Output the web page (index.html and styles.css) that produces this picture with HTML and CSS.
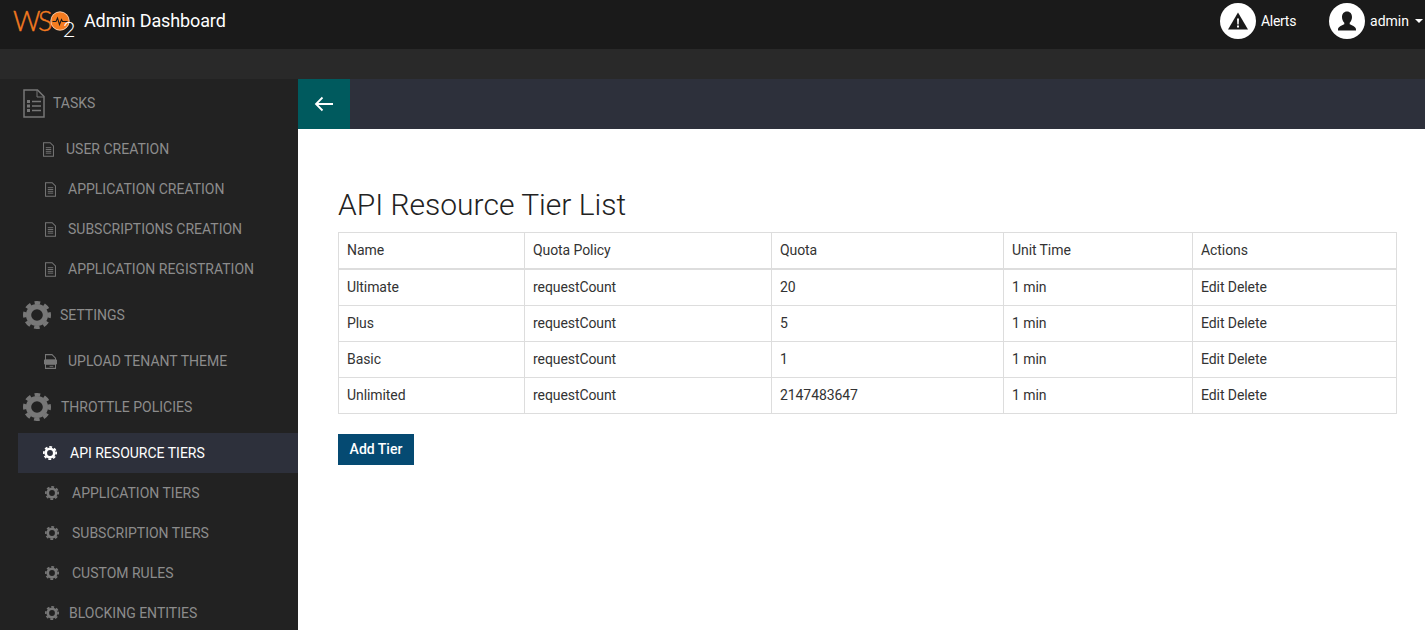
FILE: index.html
```html
<!DOCTYPE html>
<html lang="en">
<head>
    <meta charset="UTF-8">
    <title>API Resource Tier List</title>
    <link rel="stylesheet" href="styles.css">
</head>
<body>
    <svg class="icon-defs" width="0" height="0">
        <symbol id="gear" viewBox="0 0 24 24">
            <circle cx="12" cy="12" r="7.25" fill="none" stroke="currentColor" stroke-width="4.5"/>
            <circle cx="12" cy="12" r="10.5" fill="none" stroke="currentColor" stroke-width="3" stroke-dasharray="4.7 3.55" transform="rotate(-12.8 12 12)"/>
        </symbol>
        <symbol id="doc" viewBox="0 0 12 16">
            <path d="M.6.6h7.2l3.6 3.6v11.2H.6z" fill="none" stroke="currentColor" stroke-width="1.1"/>
            <path d="M3 6h6M3 8h6M3 10h6M3 12h6" stroke="currentColor" stroke-width="1"/>
        </symbol>
        <symbol id="doc-file" viewBox="0 0 14 16">
            <path d="M1.600.6h7l3.800 3.800v2H1.600zM1.600 11h10.800v4.400H1.600z" fill="none" stroke="currentColor" stroke-width="1.1"/>
            <rect x="0" y="6" width="14" height="5" fill="currentColor"/>
            <path d="M6 13.200h4" stroke="currentColor" stroke-width="1"/>
        </symbol>
    </svg>

    <header class="topbar">
        <div class="brand">
            <span class="logo">
                <span class="logo-ws">WS</span>
                <svg class="logo-o" viewBox="0 0 20 20">
                    <circle cx="10" cy="10" r="9.5" fill="#f47b20"/>
                    <circle cx="10" cy="10" r="9.2" fill="none" stroke="#fff" stroke-width=".6"/>
                    <path d="M2.500 10.500h3.500l1.500-3.500 2 6.500 2-5 1 2h5" fill="none" stroke="#1a1a1a" stroke-width="1.100"/>
                </svg>
                <span class="logo-two">2</span>
            </span>
            <span class="brand-title">Admin Dashboard</span>
        </div>
        <div class="top-actions">
            <a class="top-link top-alerts">
                <span class="round-icon">
                    <svg width="22" height="20" viewBox="0 0 22 20">
                        <path d="M11 1.500L21 18.500H1z" fill="#1a1a1a"/>
                        <path d="M10 7.500h2l-.3 6h-1.400zM10 14.600h2v2h-2z" fill="#fff"/>
                    </svg>
                </span>
                Alerts
            </a>
            <a class="top-link">
                <span class="round-icon">
                    <svg width="24" height="24" viewBox="0 0 24 24">
                        <path d="M12 2.500c3.200 0 5 2.400 5 5.600 0 2.400-1 4.500-2.300 5.700v1.500c1.500.9 6.300 2 6.300 5.200v1H3v-1c0-3.200 4.800-4.300 6.300-5.200v-1.500C8 12.600 7 10.500 7 8.100c0-3.200 1.800-5.600 5-5.600z" fill="#1a1a1a"/>
                    </svg>
                </span>
                admin
                <span class="caret"></span>
            </a>
        </div>
    </header>
    <div class="subbar"></div>

    <div class="layout">
        <nav class="sidebar">
            <div class="nav-group">
                <svg class="group-doc" width="22" height="29" viewBox="0 0 22 29">
                    <path d="M1 1h13.500L21 7.500V28H1z" fill="none" stroke="currentColor" stroke-width="1.500"/>
                    <path d="M14 1v7h7" fill="none" stroke="currentColor" stroke-width="1"/>
                    <path d="M4 11h3v3H4zM4 15.500h3v3H4zM4 20h3v3H4z" fill="currentColor"/>
                    <path d="M9 12.500h9M9 17h9M9 21.500h9" stroke="currentColor" stroke-width="1.500"/>
                </svg>
                <span class="group-label">TASKS</span>
            </div>
            <ul class="nav-list">
                <li class="nav-item item-first"><svg class="item-doc"><use href="#doc"/></svg><span>USER CREATION</span></li>
                <li class="nav-item"><svg class="item-doc"><use href="#doc"/></svg><span>APPLICATION CREATION</span></li>
                <li class="nav-item"><svg class="item-doc"><use href="#doc"/></svg><span>SUBSCRIPTIONS CREATION</span></li>
                <li class="nav-item"><svg class="item-doc"><use href="#doc"/></svg><span>APPLICATION REGISTRATION</span></li>
            </ul>

            <div class="nav-group group-tight">
                <svg class="group-gear"><use href="#gear"/></svg>
                <span class="group-label">SETTINGS</span>
            </div>
            <ul class="nav-list">
                <li class="nav-item item-upload"><svg class="item-file"><use href="#doc-file"/></svg><span>UPLOAD TENANT THEME</span></li>
            </ul>

            <div class="nav-group">
                <svg class="group-gear"><use href="#gear"/></svg>
                <span class="group-label">THROTTLE POLICIES</span>
            </div>
            <ul class="nav-list">
                <li class="nav-item item-first item-active"><svg class="item-gear"><use href="#gear"/></svg><span>API RESOURCE TIERS</span></li>
                <li class="nav-item"><svg class="item-gear"><use href="#gear"/></svg><span>APPLICATION TIERS</span></li>
                <li class="nav-item"><svg class="item-gear"><use href="#gear"/></svg><span>SUBSCRIPTION TIERS</span></li>
                <li class="nav-item"><svg class="item-gear"><use href="#gear"/></svg><span>CUSTOM RULES</span></li>
                <li class="nav-item item-tight"><svg class="item-gear"><use href="#gear"/></svg><span>BLOCKING ENTITIES</span></li>
            </ul>
        </nav>

        <div class="page">
            <div class="crumbs">
                <a class="back-btn">
                    <svg width="20" height="16" viewBox="0 0 20 16">
                        <path d="M19 8H2M8.500 1.500L2 8l6.500 6.500" fill="none" stroke="#fff" stroke-width="1.800"/>
                    </svg>
                </a>
            </div>
            <main class="content">
                <h1>API Resource Tier List</h1>
                <table class="tier-table">
                    <colgroup>
                        <col class="col-name">
                        <col class="col-policy">
                        <col class="col-quota">
                        <col class="col-unit">
                        <col>
                    </colgroup>
                    <thead>
                        <tr>
                            <th>Name</th>
                            <th>Quota Policy</th>
                            <th>Quota</th>
                            <th>Unit Time</th>
                            <th>Actions</th>
                        </tr>
                    </thead>
                    <tbody>
                        <tr>
                            <td>Ultimate</td>
                            <td>requestCount</td>
                            <td>20</td>
                            <td>1 min</td>
                            <td>Edit Delete</td>
                        </tr>
                        <tr>
                            <td>Plus</td>
                            <td>requestCount</td>
                            <td>5</td>
                            <td>1 min</td>
                            <td>Edit Delete</td>
                        </tr>
                        <tr>
                            <td>Basic</td>
                            <td>requestCount</td>
                            <td>1</td>
                            <td>1 min</td>
                            <td>Edit Delete</td>
                        </tr>
                        <tr>
                            <td>Unlimited</td>
                            <td>requestCount</td>
                            <td>2147483647</td>
                            <td>1 min</td>
                            <td>Edit Delete</td>
                        </tr>
                    </tbody>
                </table>
                <button type="button" class="add-btn">Add Tier</button>
            </main>
        </div>
    </div>
</body>
</html>
```

FILE: styles.css
```css
html, body {
    height: 100%;
}

body {
    font-family: Roboto, "Liberation Sans", sans-serif;
    font-size: 14px;
    margin: 0;
    background-color: #fff;
    color: #333;
    display: flex;
    flex-direction: column;
    overflow: hidden;
}

.icon-defs {
    display: none;
}

/* top header */
.topbar {
    flex: none;
    height: 49px;
    background-color: #1a1a1a;
    color: #fff;
    display: flex;
    justify-content: space-between;
    align-items: flex-start;
}

.brand {
    display: flex;
    align-items: center;
    height: 41px;
    padding-left: 13px;
}

.logo {
    display: flex;
    align-items: center;
    width: 71px;
    height: 41px;
}

.logo-ws {
    font-family: Lato, sans-serif;
    font-weight: 300;
    font-size: 27px;
    line-height: 41px;
    letter-spacing: -2.5px;
    color: #f47b20;
    -webkit-text-stroke: .4px #f47b20;
}

.logo-o {
    width: 20px;
    height: 20px;
    flex: none;
}

.logo-two {
    font-family: Lato, sans-serif;
    font-weight: 300;
    font-size: 22px;
    line-height: 22px;
    margin: 17px 0 0 -7px;
}

.brand-title {
    font-size: 18px;
    line-height: 41px;
    letter-spacing: -.12px;
}

.top-actions {
    display: flex;
    align-items: center;
    height: 41px;
}

.top-link {
    display: flex;
    align-items: center;
    color: #fff;
    font-size: 14px;
}

.top-alerts {
    margin-right: 33px;
    letter-spacing: -.3px;
}

.round-icon {
    width: 36px;
    height: 36px;
    margin-right: 5px;
    border-radius: 50%;
    background-color: #fff;
    display: flex;
    align-items: center;
    justify-content: center;
}

.caret {
    width: 0;
    height: 0;
    margin: 0 2px 0 6px;
    border-left: 4px solid transparent;
    border-right: 4px solid transparent;
    border-top: 4px solid #fff;
}

.subbar {
    flex: none;
    height: 30px;
    background-color: #292929;
}

.layout {
    flex: 1;
    display: flex;
    min-height: 0;
}

/* sidebar */
.sidebar {
    flex: none;
    width: 298px;
    background-color: #222;
    color: #8c8c8c;
    overflow: hidden;
}

.nav-group {
    display: flex;
    align-items: center;
    height: 48px;
    padding-left: 23px;
}

.group-doc {
    margin-right: 8px;
    color: #777;
}

.group-gear {
    width: 28px;
    height: 28px;
    margin-right: 10px;
    color: #777;
}

.group-tight .group-gear {
    margin-right: 9px;
}

.nav-list {
    list-style: none;
    margin: 0;
    padding: 2px 0;
}

.nav-item {
    display: flex;
    align-items: center;
    height: 40px;
    margin-left: 18px;
    padding-left: 27px;
}

.nav-item.item-first {
    padding-left: 25px;
}

.nav-item.item-upload {
    padding-left: 26px;
}

.item-doc {
    width: 11px;
    height: 15px;
    margin-right: 12px;
    color: #777;
}

.item-file {
    width: 13px;
    height: 15px;
    margin-right: 11px;
    color: #777;
}

.item-gear {
    width: 14px;
    height: 14px;
    margin-right: 13px;
    color: #777;
}

.nav-item.item-tight .item-gear {
    margin-right: 10px;
}

.nav-item.item-active {
    background-color: #2d303b;
    color: #fff;
}

.nav-item.item-active .item-gear {
    color: #fff;
}

/* main area */
.page {
    flex: 1;
    min-width: 0;
}

.crumbs {
    height: 50px;
    background-color: #2d303b;
}

.back-btn {
    width: 52px;
    height: 50px;
    background-color: #005a5e;
    display: flex;
    align-items: center;
    justify-content: center;
}

.content {
    padding: 54px 28px 0 40px;
}

h1 {
    font-size: 30px;
    font-weight: 300;
    line-height: 44px;
    margin: 0 0 5px;
    color: #222;
}

.tier-table {
    width: 100%;
    table-layout: fixed;
    border-collapse: collapse;
    margin-bottom: 20px;
}

.col-name {
    width: 186px;
}

.col-policy {
    width: 247px;
}

.col-quota {
    width: 232px;
}

.col-unit {
    width: 189px;
}

th, td {
    border: 1px solid #ddd;
    padding: 8px;
    height: 36px;
    box-sizing: border-box;
    text-align: left;
    font-weight: 400;
    line-height: 19px;
    letter-spacing: -.08px;
}

th {
    border-bottom-width: 2px;
}

.add-btn {
    display: block;
    width: 76px;
    height: 31px;
    padding: 0 0 2px;
    border: none;
    background-color: #054a72;
    color: #fff;
    font-family: Roboto, "Liberation Sans", sans-serif;
    font-size: 14px;
    font-weight: 500;
}
```
